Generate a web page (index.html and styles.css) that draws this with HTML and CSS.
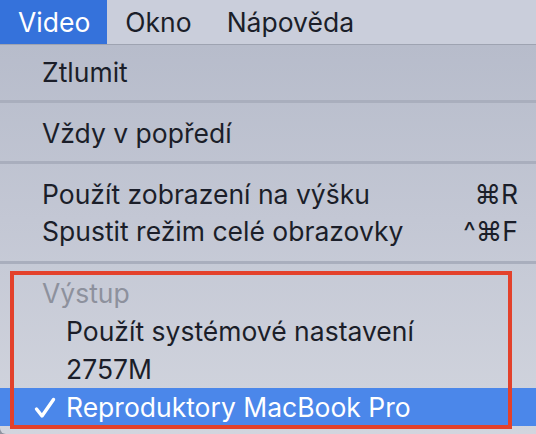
FILE: index.html
```html
<!DOCTYPE html>
<html>
<head>
	<title>Video menu</title>
<link rel="stylesheet" href="styles.css">
</head>
<body>
	<div class="menubar">
		<span class="bar-item active">Video</span>
		<span class="bar-item">Okno</span>
		<span class="bar-item">Nápověda</span>
	</div>
	<div class="menu">
		<div class="row"><span>Ztlumit</span></div>
		<div class="separator"></div>
		<div class="row"><span>Vždy v popředí</span></div>
		<div class="separator"></div>
		<div class="row"><span>Použít zobrazení na výšku</span><span class="shortcut">⌘R</span></div>
		<div class="row"><span>Spustit režim celé obrazovky</span><span class="shortcut">^⌘F</span></div>
		<div class="separator last"></div>
		<div class="group">
			<div class="row group-row header"><span>Výstup</span></div>
			<div class="row group-row sub"><span>Použít systémové nastavení</span></div>
			<div class="row group-row sub"><span>2757M</span></div>
			<div class="row group-row sub selected">
				<svg class="check" width="22" height="22" viewBox="0 0 22 22">
					<path d="M2.5 12 L8 19 L19.5 2.5" fill="none" stroke="#ffffff" stroke-width="3.4" stroke-linecap="round" stroke-linejoin="round"/>
				</svg>
				<span>Reproduktory MacBook Pro</span>
			</div>
			<div class="annotation"></div>
		</div>
	</div>
</body>
</html>
```

FILE: styles.css
```css
body {
	margin: 0;
	width: 536px;
	height: 434px;
	overflow: hidden;
	font-family: Inter, "Noto Sans", sans-serif;
	font-size: 26.5px;
	color: #1b1e29;
	background: #8e93a0;
}

.menubar {
	display: flex;
	height: 44px;
	background: #cacedb;
	border-bottom: 1px solid #9ea3b1;
}

.bar-item {
	padding: 0 17px 0 18px;
	line-height: 44px;
}

.bar-item.active {
	background: #3572db;
	color: #ffffff;
}

.menu {
	padding-top: 8px;
	height: 381px;
	background: linear-gradient(to bottom, #b7bccb 0%, #c3c7d4 45%, #d2d5de 100%);
	border-bottom-left-radius: 6px;
}

.row {
	display: flex;
	justify-content: space-between;
	align-items: center;
	height: 37px;
	padding: 0 18px 0 42px;
	white-space: nowrap;
}

.separator {
	height: 3px;
	margin: 10px 0 11px;
	background: #a9aebd;
}

.separator.last {
	margin: 12px 0 10px;
}

.group {
	position: relative;
}

.group-row {
	height: 38px;
}

.header {
	color: #8d919d;
}

.sub {
	padding-left: 66px;
}

.selected {
	position: relative;
	justify-content: flex-start;
	background: #4b87ea;
	color: #ffffff;
}

.check {
	position: absolute;
	left: 34px;
	top: 9px;
}

.annotation {
	position: absolute;
	left: 10px;
	top: -3px;
	width: 494px;
	height: 150px;
	border: 4px solid #e3412b;
}
```
